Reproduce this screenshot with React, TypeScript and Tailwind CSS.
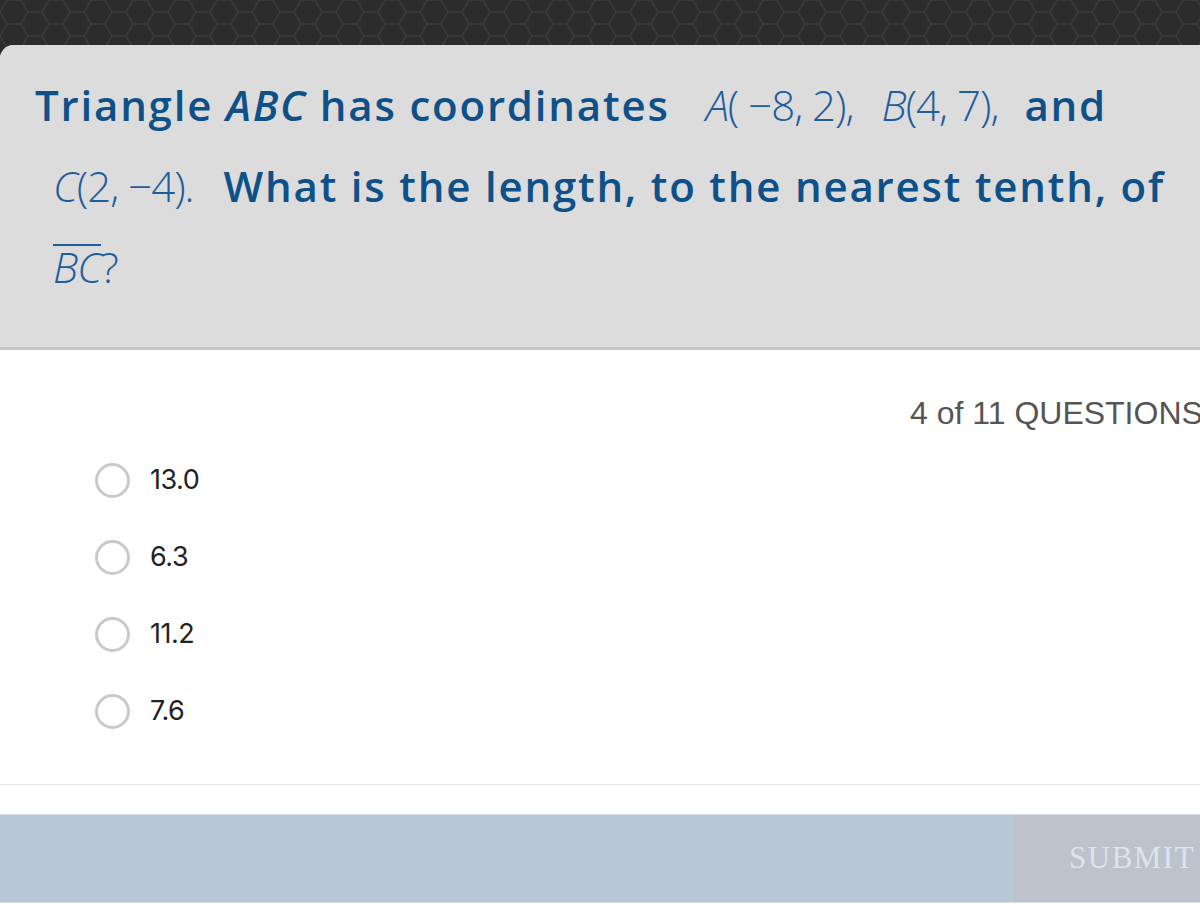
import React from "react";

const options = ["13.0", "6.3", "11.2", "7.6"];

function HexBackground() {
    return (
        <svg className="absolute inset-0 w-full h-full" xmlns="http://www.w3.org/2000/svg">
            <defs>
                <pattern id="hex" width="42" height="24" patternUnits="userSpaceOnUse">
                    <path
                        d="M0 12 L7 0 L21 0 L28 12 L21 24 L7 24 Z M28 12 L42 12"
                        fill="none"
                        stroke="#3a3a3a"
                        strokeWidth="1.5"
                    />
                </pattern>
            </defs>
            <rect width="100%" height="100%" fill="#2c2c2c" />
            <rect width="100%" height="100%" fill="url(#hex)" />
        </svg>
    );
}

function Math({ children }: { children: React.ReactNode }) {
    return (
        <span className="font-['Open_Sans',sans-serif] font-light text-[#1f5d9c] text-[42px] tracking-[-1px]">
            {children}
        </span>
    );
}

export default function App() {
    return (
        <div className="relative w-[1200px] h-[924px] overflow-hidden bg-[#2c2c2c]">
            <HexBackground />
            <div className="relative mt-[45px] w-[1240px] h-[879px] bg-white rounded-tl-[14px] overflow-hidden flex flex-col">
                <div className="h-[305px] bg-[#dcdcdc] border-b-[3px] border-[#c6c6c6] pl-[35px] pt-[19px]">
                    <p className="font-['Open_Sans',sans-serif] font-semibold text-[#0e5189] text-[42px] leading-[81px] tracking-[1.8px] w-[1190px] whitespace-nowrap">
                        Triangle <i>ABC</i> has coordinates
                        <span className="ml-[36px]"><Math><i>A</i>( −8, 2),</Math></span>
                        <span className="ml-[28px]"><Math><i>B</i>(4, 7),</Math></span>
                        <span className="ml-[26px]">and</span>
                        <br />
                        <span className="ml-[18px]"><Math><i>C</i>(2, −4).</Math></span>
                        <span className="ml-[30px]">What is the length, to the nearest tenth, of</span>
                        <br />
                        <span className="ml-[18px]">
                            <Math>
                                <span className="inline-block leading-[42px] border-t-2 border-[#1f5d9c]"><i>BC</i></span>?
                            </Math>
                        </span>
                    </p>
                </div>

                <div className="flex-1 relative">
                    <div className="pl-[910px] pt-[47px] font-['Liberation_Sans',Arial,sans-serif] text-[32px] text-[#555555] leading-none whitespace-nowrap">
                        4 of 11 QUESTIONS
                    </div>
                    <div className="flex flex-col gap-[43px] pl-[95px] pt-[34px]">
                        {options.map((opt) => (
                            <label key={opt} className="flex items-center gap-[20px] h-[34px]">
                                <span className="w-[35px] h-[35px] rounded-full border-[3px] border-[#c9c9c9] bg-white" />
                                <span className="font-['Inter',sans-serif] text-[27px] text-[#222222] tracking-[-0.5px]">
                                    {opt}
                                </span>
                            </label>
                        ))}
                    </div>
                </div>

                <div className="h-[30px] border-t border-[#e6e6e6] bg-white mt-auto" />
                <div className="h-[88px] flex bg-[#b8c8d6] border-t border-[#d5dde5]">
                    <div className="flex-1" />
                    <div className="w-[227px] bg-[#bcc3cd] flex items-center pl-[56px]">
                        <span className="font-['Liberation_Serif',serif] text-[31px] tracking-[1.5px] text-[#dde4ec]">
                            SUBMIT
                        </span>
                    </div>
                </div>
                <div className="h-[22px] bg-white border-t border-[#d5dde5]" />
            </div>
        </div>
    );
}
